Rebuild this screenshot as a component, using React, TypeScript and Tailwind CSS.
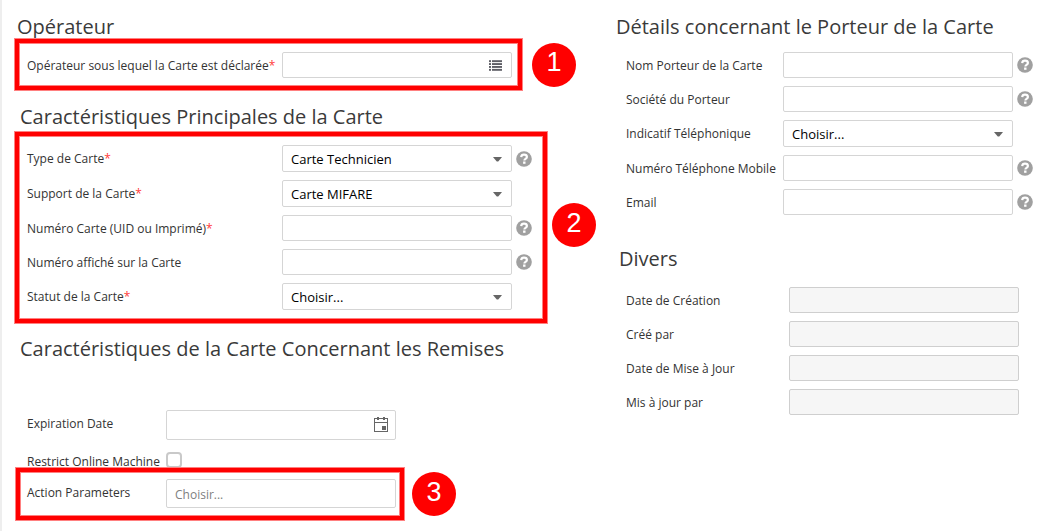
import type { ReactNode } from "react";

function HelpIcon() {
  return (
    <button type="button" aria-label="Aide" className="ml-1 size-4 shrink-0">
      <svg viewBox="0 0 16 16" className="size-4">
        <circle cx="8" cy="8" r="7.8" fill="#a0a0a0" />
        <path d="M5.2 6.1C5.3 4.5 6.4 3.7 8 3.7c1.7 0 2.9.9 2.9 2.3 0 1.9-2.5 1.9-2.5 3.4" fill="none" stroke="#fff" strokeWidth="2.2" />
        <rect x="7.1" y="10.5" width="2.4" height="2.3" fill="#fff" />
      </svg>
    </button>
  );
}

function ListIcon() {
  return (
    <svg viewBox="0 0 13 11" className="h-[11px] w-[13px]" fill="#5f5f66">
      {[0.2, 3.1, 6, 8.9].map((y) => (
        <g key={y}>
          <rect x="0" y={y} width="2" height="1.9" />
          <rect x="3" y={y} width="10" height="1.9" />
        </g>
      ))}
    </svg>
  );
}

function CalendarIcon() {
  return (
    <svg viewBox="0 0 14 15" className="h-[15px] w-[14px]" fill="#666" shapeRendering="crispEdges">
      <path d="M0 1h14v14H0zM1 2v3h12V2zM1 6v8h12V6z" fillRule="evenodd" />
      <rect x="3" y="0" width="2" height="3" />
      <rect x="9" y="0" width="2" height="3" />
      <rect x="8" y="9" width="4" height="4" />
    </svg>
  );
}

function Heading({ children, className = "" }: { children: ReactNode; className?: string }) {
  return <h2 className={`text-[20px] leading-[25px] whitespace-nowrap text-[#3a3a3a] ${className}`}>{children}</h2>;
}

type FieldProps = {
  id: string;
  label: string;
  labelClass: string;
  required?: boolean;
  help?: boolean;
  select?: string;
  disabled?: boolean;
  placeholder?: string;
  height?: string;
  icon?: ReactNode;
};

function Field({ id, label, labelClass, required, help, select, disabled, placeholder, height = "h-[26px]", icon }: FieldProps) {
  return (
    <div className="flex items-center">
      <label htmlFor={id} className={`shrink-0 text-[12px] leading-4 whitespace-nowrap text-[#333] ${labelClass}`}>
        {label}
        {required && <span className="text-[#ff3b3b]">*</span>}
      </label>
      <div className="relative w-[230px] shrink-0">
        {select ? (
          <>
            <select id={id} className="block h-[27px] w-full appearance-none rounded-xs border border-[#d5d5d5] bg-white px-2 pt-[2px] text-[13px] text-black">
              <option>{select}</option>
            </select>
            <svg viewBox="0 0 9 5" className="pointer-events-none absolute top-[12px] right-[10px] h-[5px] w-[9px]" fill="#666">
              <path d="M0 0h9L5.5 4.2q-1 .8-2 0z" />
            </svg>
          </>
        ) : (
          <input
            id={id}
            type="text"
            disabled={disabled}
            placeholder={placeholder}
            className={`block w-full rounded-xs border border-[#d5d5d5] bg-white px-2 text-[12px] placeholder:text-[#808080] disabled:border-[#cfcfcf] disabled:bg-[#f6f6f6] ${height}`}
          />
        )}
        {icon}
      </div>
      {help && <HelpIcon />}
    </div>
  );
}

type MarkedProps = { number: number; gap: string; frame: string; badge?: string; children: ReactNode };

function Marked({ number, gap, frame, badge = "", children }: MarkedProps) {
  return (
    <div className={`flex items-center ${gap}`}>
      <div className={`flex flex-col gap-2 border-4 border-[#f00] shadow-[0_0_0_1px_#ff8080,inset_0_0_0_1px_#ff8080] ${frame}`}>{children}</div>
      <div
        className={`flex size-11 shrink-0 items-center justify-center rounded-full bg-[#f00] pb-1 font-['Liberation_Sans',sans-serif] text-[27px] leading-none text-white ${badge}`}
      >
        {number}
      </div>
    </div>
  );
}

export default function App() {
  return (
    <form className="grid min-h-screen grid-cols-[minmax(0,600fr)_minmax(0,439fr)] border-l-2 border-[#eee] bg-white pt-[14px] font-['Open_Sans','Noto_Sans',sans-serif]">
      <div className="pl-[13px]">
        <Heading className="pl-[2px]">Opérateur</Heading>
        <Marked number={1} gap="gap-[10px]" frame="pt-[9px] pr-[6px] pb-2 pl-2">
          <Field
            id="operateur"
            label="Opérateur sous lequel la Carte est déclarée"
            labelClass="w-[255px] pt-px"
            required
            icon={
              <button type="button" aria-label="Liste des opérateurs" className="absolute top-2 right-[10px]">
                <ListIcon />
              </button>
            }
          />
        </Marked>

        <Heading className="mt-[14px] mb-[3px] pl-[5px]">Caractéristiques Principales de la Carte</Heading>
        <Marked number={2} gap="gap-[5px]" frame="pt-[9px] pr-[11px] pb-[9px] pl-2" badge="mb-[5px]">
          <Field id="type" label="Type de Carte" labelClass="w-[255px] pt-px" required select="Carte Technicien" help />
          <Field id="support" label="Support de la Carte" labelClass="w-[255px] pt-px" required select="Carte MIFARE" />
          <Field id="uid" label="Numéro Carte (UID ou Imprimé)" labelClass="w-[255px] pt-px" required help />
          <Field id="affiche" label="Numéro affiché sur la Carte" labelClass="w-[255px] pt-px" help />
          <Field id="statut" label="Statut de la Carte" labelClass="w-[255px] pt-px" required select="Choisir..." />
        </Marked>

        <Heading className="mt-[13px] mb-[49px] pl-[5px]">Caractéristiques de la Carte Concernant les Remises</Heading>
        <div className="mb-3 pl-3">
          <Field
            id="expiration"
            label="Expiration Date"
            labelClass="w-[139px] pb-[2px]"
            height="h-[30px]"
            icon={
              <button type="button" aria-label="Choisir une date" className="absolute top-[7px] right-2">
                <CalendarIcon />
              </button>
            }
          />
        </div>
        <div className="flex h-4 items-center pl-3">
          <label htmlFor="restrict" className="w-[139px] shrink-0 pt-1 text-[12px] leading-4 whitespace-nowrap text-[#333]">
            Restrict Online Machine
          </label>
          <input id="restrict" type="checkbox" className="size-4 appearance-none rounded-[4px] border-2 border-[#c9c9c9] bg-white" />
        </div>
        <div className="pl-px">
          <Marked number={3} gap="gap-2" frame="pt-[7px] pr-1 pb-2 pl-[7px]">
            <Field id="action" label="Action Parameters" labelClass="w-[139px] pb-px" placeholder="Choisir..." height="h-[29px] pt-[2px]" />
          </Marked>
        </div>
      </div>

      <div className="pl-[14px]">
        <Heading className="mb-[13px]">Détails concernant le Porteur de la Carte</Heading>
        <div className="mb-[31px] flex flex-col gap-2 pl-[10px]">
          <Field id="nom" label="Nom Porteur de la Carte" labelClass="w-[157px] pt-px" help />
          <Field id="societe" label="Société du Porteur" labelClass="w-[157px] pt-px" help />
          <Field id="indicatif" label="Indicatif Téléphonique" labelClass="w-[157px] pt-px" select="Choisir..." />
          <Field id="mobile" label="Numéro Téléphone Mobile" labelClass="w-[157px] pt-px" help />
          <Field id="email" label="Email" labelClass="w-[157px] pt-px" help />
        </div>
        <Heading className="mb-4 pl-[3px]">Divers</Heading>
        <div className="flex flex-col gap-2 pl-[10px]">
          <Field id="creation" label="Date de Création" labelClass="w-[163px] pt-px" disabled />
          <Field id="creepar" label="Créé par" labelClass="w-[163px] pt-px" disabled />
          <Field id="maj" label="Date de Mise à Jour" labelClass="w-[163px] pt-px" disabled />
          <Field id="majpar" label="Mis à jour par" labelClass="w-[163px] pt-px" disabled />
        </div>
      </div>
    </form>
  );
}
